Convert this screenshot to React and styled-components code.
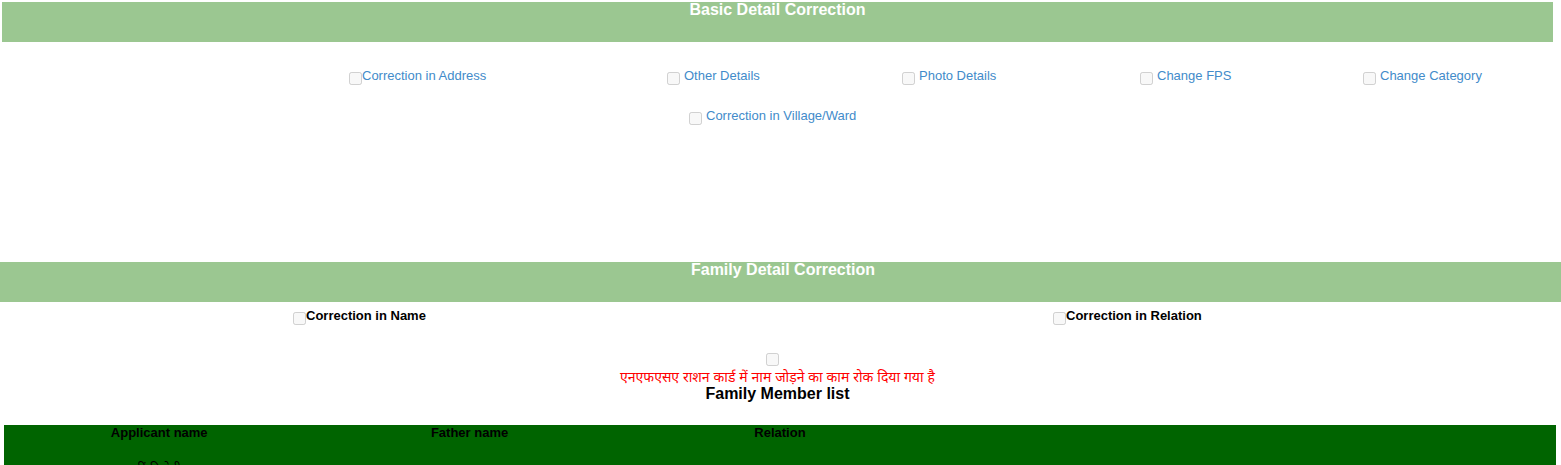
import React from 'react'
import styled, { createGlobalStyle } from 'styled-components'

const GlobalStyle = createGlobalStyle`
    body{
        margin:0;
        background:#fff;
        font-family:"Liberation Sans", Arial, "Noto Sans", sans-serif;
    }
`

const Page = styled.div`
    width:1561px;
    height:465px;
    overflow:hidden;
`
const SectionBar = styled.div`
    height:40px;
    margin:${p => p.full ? '0' : '2px 8px 0 2px'};
    padding-left:${p => p.full ? '5px' : '0px'};
    background:#9bc791;
    color:#fff;
    font-size:16px;
    font-weight:bold;
    line-height:16px;
    text-align:center;
`
const OptionGrid = styled.div`
    display:grid;
    grid-template-columns:${p => p.cols};
    padding-left:${p => p.pl};
    margin-top:${p => p.mt || '0px'};
`
const Option = styled.label`
    display:block;
    white-space:nowrap;
    font-size:13px;
    line-height:20px;
    color:${p => p.dark ? '#000' : '#428bca'};
    font-weight:${p => p.dark ? 'bold' : 'normal'};
`
const Check = styled.input.attrs({ type: 'checkbox', disabled: true })`
    width:13px;
    height:13px;
    margin:0 ${p => p.gap || '0px'} 0 0;
    vertical-align:-5px;
`
const Spacer = styled.div`
    height:${p => p.h};
`
const CenterBlock = styled.div`
    margin:0 8px 0 2px;
    text-align:center;
`
const CheckLine = styled.div`
    margin-top:27px;
    height:13px;
    line-height:13px;
    font-size:13px;
    input{ margin:0 11px 0 0; vertical-align:top; }
`
const Notice = styled.div`
    color:#ff0000;
    font-size:14px;
    line-height:18px;
    padding-top:2px;
    font-family:"Liberation Sans", Arial, "Noto Sans Devanagari", "Noto Sans", sans-serif;
`
const ListTitle = styled.div`
    font-size:16px;
    font-weight:bold;
    line-height:16px;
    color:#000;
`
const MemberTable = styled.table`
    margin:23px 5px 0 4px;
    width:1552px;
    border-collapse:collapse;
    background:#006400;
    table-layout:fixed;
    th, td{
        padding:0;
        text-align:center;
        vertical-align:top;
        font-size:13px;
        color:#000;
    }
    th{
        height:35px;
        line-height:15px;
        font-weight:bold;
    }
    td{
        line-height:18px;
        height:36px;
    }
`

const basicOptions = [
    { label: 'Correction in Address', gap: '0px' },
    { label: 'Other Details', gap: '4px' },
    { label: 'Photo Details', gap: '4px' },
    { label: 'Change FPS', gap: '4px' },
    { label: 'Change Category', gap: '4px' },
]

const members = [
    { name: 'रिंकी देवी', father: 'राम', relation: '' },
]

export default function App() {
    return (
        <Page>
            <GlobalStyle />
            <SectionBar>Basic Detail Correction</SectionBar>
            <OptionGrid cols='318px 235px 238px 223px auto' pl='349px' mt='24px'>
                {basicOptions.map(o => (
                    <Option key={o.label}><Check gap={o.gap} />{o.label}</Option>
                ))}
            </OptionGrid>
            <OptionGrid cols='auto' pl='689px' mt='20px'>
                <Option><Check gap='4px' />Correction in Village/Ward</Option>
            </OptionGrid>
            <Spacer h='136px' />
            <SectionBar full>Family Detail Correction</SectionBar>
            <OptionGrid cols='760px auto' pl='293px' mt='4px'>
                <Option dark><Check />Correction in Name</Option>
                <Option dark><Check />Correction in Relation</Option>
            </OptionGrid>
            <CenterBlock>
                <CheckLine><Check /></CheckLine>
                <Notice>एनएफएसए राशन कार्ड में नाम जोड़ने का काम रोक दिया गया है</Notice>
                <ListTitle>Family Member list</ListTitle>
            </CenterBlock>
            <MemberTable>
                <thead>
                    <tr>
                        <th>Applicant name</th>
                        <th>Father name</th>
                        <th>Relation</th>
                        <th></th>
                        <th></th>
                    </tr>
                </thead>
                <tbody>
                    {members.map((m, i) => (
                        <tr key={i}>
                            <td>{m.name}</td>
                            <td>{m.father}</td>
                            <td>{m.relation}</td>
                            <td></td>
                            <td></td>
                        </tr>
                    ))}
                </tbody>
            </MemberTable>
        </Page>
    )
}
